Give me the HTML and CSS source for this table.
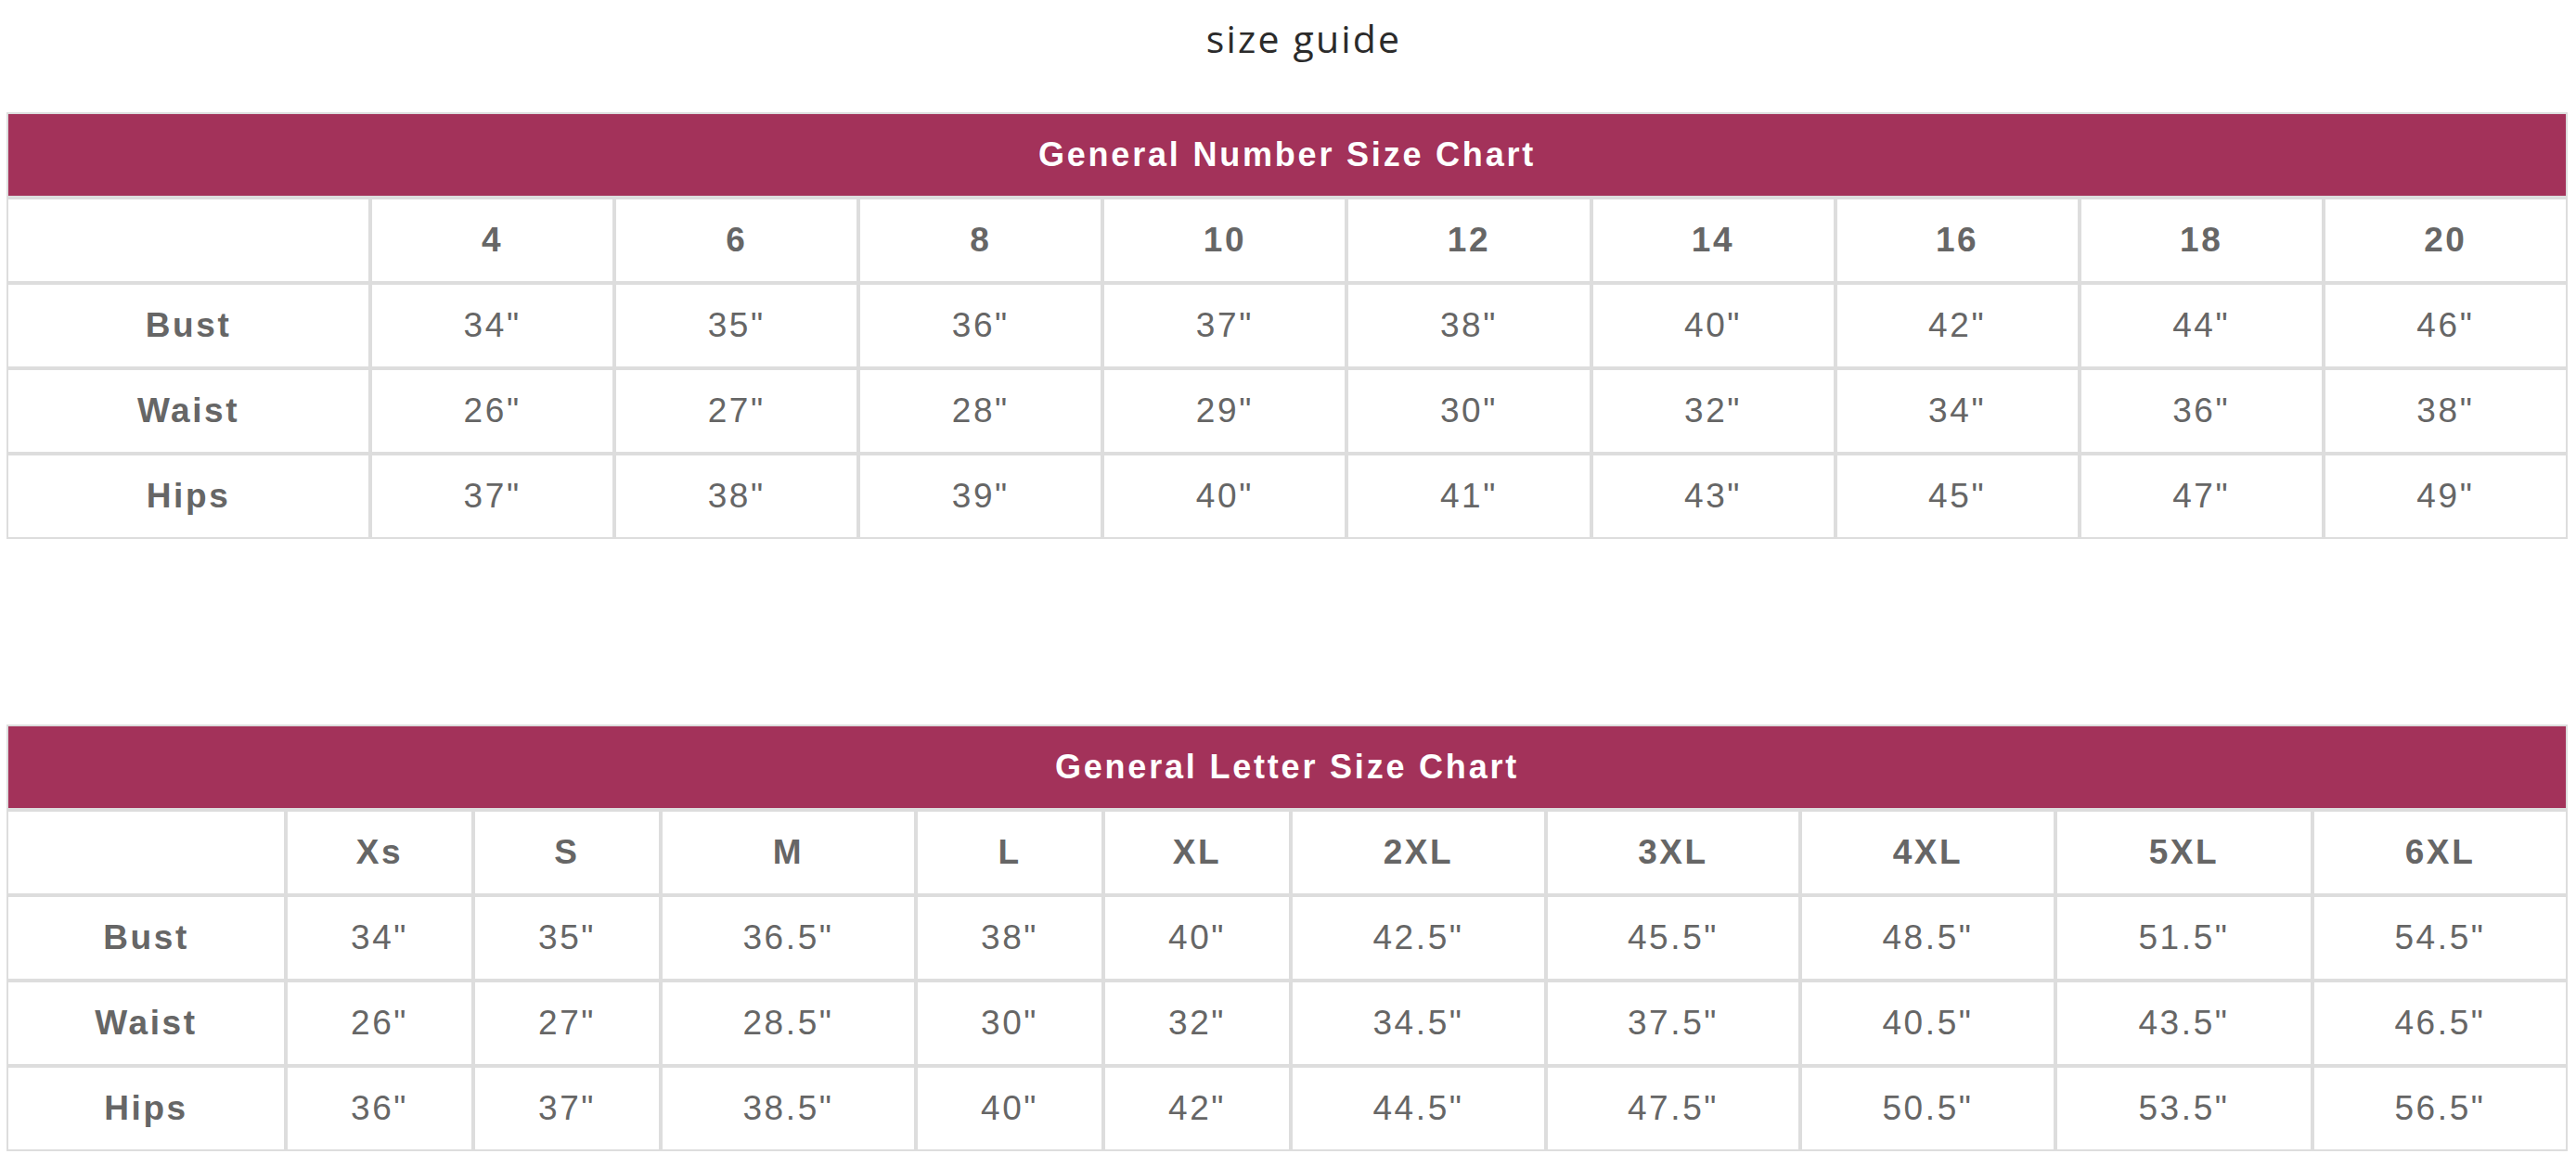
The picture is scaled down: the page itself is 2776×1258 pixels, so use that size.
FILE: index.html
```html
<!DOCTYPE html>
<html lang="en">
<head>
<meta charset="utf-8">
<title>size guide</title>
<link rel="stylesheet" href="styles.css">
</head>
<body>
<main class="guide">
  <h1 class="guide-title">size guide</h1>

  <table class="chart chart-number">
    <colgroup>
      <col class="col-label-number">
      <col class="col-number" span="9">
    </colgroup>
    <thead>
      <tr><th class="chart-title" colspan="10">General Number Size Chart</th></tr>
    </thead>
    <tbody>
      <tr class="size-row"><td class="blank"></td><th>4</th><th>6</th><th>8</th><th>10</th><th>12</th><th>14</th><th>16</th><th>18</th><th>20</th></tr>
      <tr><th class="label">Bust</th><td>34"</td><td>35"</td><td>36"</td><td>37"</td><td>38"</td><td>40"</td><td>42"</td><td>44"</td><td>46"</td></tr>
      <tr><th class="label">Waist</th><td>26"</td><td>27"</td><td>28"</td><td>29"</td><td>30"</td><td>32"</td><td>34"</td><td>36"</td><td>38"</td></tr>
      <tr><th class="label">Hips</th><td>37"</td><td>38"</td><td>39"</td><td>40"</td><td>41"</td><td>43"</td><td>45"</td><td>47"</td><td>49"</td></tr>
    </tbody>
  </table>

  <table class="chart chart-letter">
    <colgroup>
      <col class="col-label-letter">
      <col class="col-narrow">
      <col class="col-narrow">
      <col class="col-wide">
      <col class="col-narrow">
      <col class="col-narrow">
      <col class="col-wide">
      <col class="col-wide-b">
      <col class="col-wide">
      <col class="col-wide-c">
      <col class="col-wide">
    </colgroup>
    <thead>
      <tr><th class="chart-title" colspan="11">General Letter Size Chart</th></tr>
    </thead>
    <tbody>
      <tr class="size-row"><td class="blank"></td><th>Xs</th><th>S</th><th>M</th><th>L</th><th>XL</th><th>2XL</th><th>3XL</th><th>4XL</th><th>5XL</th><th>6XL</th></tr>
      <tr><th class="label">Bust</th><td>34"</td><td>35"</td><td>36.5"</td><td>38"</td><td>40"</td><td>42.5"</td><td>45.5"</td><td>48.5"</td><td>51.5"</td><td>54.5"</td></tr>
      <tr><th class="label">Waist</th><td>26"</td><td>27"</td><td>28.5"</td><td>30"</td><td>32"</td><td>34.5"</td><td>37.5"</td><td>40.5"</td><td>43.5"</td><td>46.5"</td></tr>
      <tr><th class="label">Hips</th><td>36"</td><td>37"</td><td>38.5"</td><td>40"</td><td>42"</td><td>44.5"</td><td>47.5"</td><td>50.5"</td><td>53.5"</td><td>56.5"</td></tr>
    </tbody>
  </table>
</main>
</body>
</html>
```
FILE: styles.css
```css
html, body {
  margin: 0;
  padding: 0;
  background: #ffffff;
}

body {
  font-family: "Liberation Sans", Arial, Helvetica, sans-serif;
  color: #666666;
}

.guide {
  padding: 0 9px 0 7px;
}

.guide-title {
  margin: 0;
  padding: 13px 0 0 36px;
  font-family: "Open Sans", "DejaVu Sans", sans-serif;
  font-size: 41px;
  font-weight: 400;
  line-height: 56px;
  letter-spacing: 2.2px;
  color: #2b2b2b;
  text-align: center;
}

.chart {
  width: 2760px;
  table-layout: fixed;
  border-collapse: separate;
  border-spacing: 0;
  margin: 52px 0 0 0;
}

.chart-letter {
  margin-top: 200px;
}

.chart th,
.chart td {
  border: 2px solid #dddddd;
  padding: 23px 0;
  line-height: 42px;
  text-align: center;
  vertical-align: middle;
  font-size: 37px;
  letter-spacing: 2.6px;
  color: #666666;
  white-space: nowrap;
  overflow: hidden;
}

.chart td {
  font-weight: 400;
}

.chart th {
  font-weight: 700;
}

.chart .chart-title {
  background: #a3325a;
  color: #ffffff;
  font-size: 36px;
  letter-spacing: 2.8px;
}

.col-label-number { width: 392px; }
.col-number { width: 263px; }

.col-label-letter { width: 301px; }
.col-narrow { width: 202px; }
.col-wide { width: 275px; }
.col-wide-b { width: 274px; }
.col-wide-c { width: 277px; }
```
